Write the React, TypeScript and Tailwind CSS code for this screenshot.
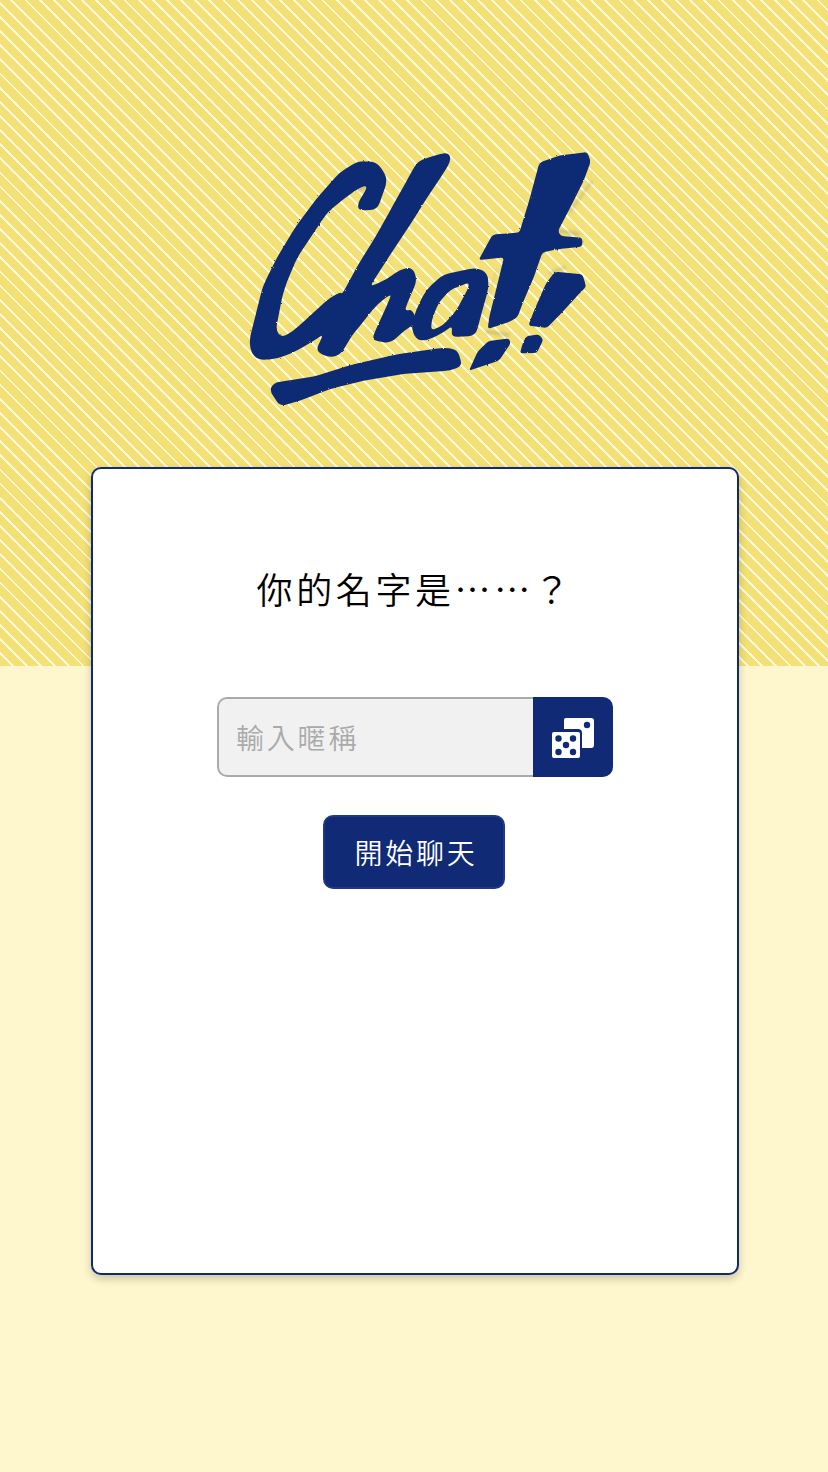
import { useState } from "react";

const NAVY = "#102a75";

// rounds each corner of a traced outline, so the brush strokes do not look like polygons
function roundPath(pts: number[][], r = 34) {
  let d = "";
  pts.forEach((p, i) => {
    const prev = pts[(i - 1 + pts.length) % pts.length];
    const next = pts[(i + 1) % pts.length];
    const lenA = Math.hypot(prev[0] - p[0], prev[1] - p[1]);
    const lenB = Math.hypot(next[0] - p[0], next[1] - p[1]);
    const a = Math.min(r, lenA / 2) / lenA;
    const b = Math.min(r, lenB / 2) / lenB;
    const ax = p[0] + (prev[0] - p[0]) * a;
    const ay = p[1] + (prev[1] - p[1]) * a;
    const bx = p[0] + (next[0] - p[0]) * b;
    const by = p[1] + (next[1] - p[1]) * b;
    d += `${i === 0 ? "M" : "L"}${ax.toFixed(1)} ${ay.toFixed(1)} Q${p[0]} ${p[1]} ${bx.toFixed(1)} ${by.toFixed(1)} `;
  });
  return d + "Z";
}

const chShape = [
  [385, 63], [440, 66], [467, 103], [470, 130], [457, 165], [442, 209], [386, 212], [383, 190], [408, 150], [410, 137],
  [390, 142], [347, 172], [292, 217], [242, 292], [202, 352], [172, 422], [157, 467], [147, 522], [137, 570], [155, 593],
  [190, 573], [250, 518], [300, 473], [333, 456], [336, 463], [388, 368], [438, 288], [488, 198], [538, 108], [563, 63],
  [610, 48], [654, 36], [664, 60], [642, 97], [592, 172], [542, 252], [482, 342], [437, 412], [419, 441], [470, 418],
  [510, 388], [547, 381], [562, 420], [532, 490], [524, 513], [547, 508], [562, 547], [522, 572], [482, 610], [433, 602],
  [428, 590], [453, 535], [478, 480], [484, 461], [442, 492], [402, 542], [362, 592], [334, 642], [300, 654], [256, 634],
  [280, 584], [267, 592], [202, 632], [140, 657], [85, 660], [63, 637], [58, 600], [73, 540], [98, 440], [138, 358],
  [198, 258], [258, 178], [328, 98],
];
const aOuter = [
  [640, 403], [740, 383], [772, 398], [777, 440], [752, 530], [737, 587], [663, 592], [668, 556], [642, 577], [590, 602],
  [558, 600], [543, 560], [558, 510], [588, 450],
];
const aHole = [[715, 428], [660, 450], [625, 490], [605, 540], [603, 572], [640, 555], [680, 510], [717, 440]];
const tShape = [
  [928, 68], [990, 46], [1072, 36], [1082, 65], [1062, 120], [1022, 200], [984, 273], [992, 288], [1057, 293], [1057, 320],
  [985, 327], [937, 337], [912, 410], [882, 480], [862, 532], [835, 547], [773, 567], [778, 530], [798, 450], [822, 352],
  [746, 360], [788, 283], [868, 278], [898, 180],
];
const bang = [[975, 395], [1057, 403], [1069, 440], [1042, 467], [992, 522], [950, 564], [895, 557], [913, 510], [948, 430]];
const bangDot = [[890, 588], [927, 583], [940, 600], [920, 639], [870, 640], [878, 610]];
const tDot = [[775, 603], [837, 595], [842, 610], [807, 662], [717, 692], [743, 635]];
const underline = [
  [133, 728], [250, 710], [370, 673], [500, 643], [640, 623], [682, 628], [697, 677], [660, 692], [520, 702], [400, 722],
  [300, 747], [210, 782], [150, 799], [118, 750],
];

function Logo() {
  return (
    <svg viewBox="0 0 1140 840" className="block w-[380px] h-[280px] ml-[230px]">
      <defs>
        <filter id="rough" x="-5%" y="-5%" width="110%" height="110%">
          <feTurbulence type="fractalNoise" baseFrequency="0.14" numOctaves="2" seed="4" />
          <feDisplacementMap in="SourceGraphic" scale="6" />
        </filter>
        <filter id="smudge" x="-30%" y="-30%" width="160%" height="160%">
          <feGaussianBlur stdDeviation="4" />
        </filter>
      </defs>
      {/* faint brush smudges */}
      <g filter="url(#smudge)" fill="none" stroke="#8a8a7a" strokeOpacity="0.4" strokeWidth="7" strokeLinecap="round">
        <path d="M385 150 L412 138" strokeWidth="12" />
        <path d="M1085 125 L1020 215" strokeWidth="6" />
        <path d="M985 272 L1045 282" strokeWidth="10" />
        <path d="M960 400 L1005 382" />
        <path d="M770 575 L835 585" strokeWidth="9" />
        <path d="M800 390 L755 530" strokeWidth="3" />
        <path d="M935 335 L925 365" />
      </g>
      <g filter="url(#rough)" fill={NAVY}>
        <path d={roundPath(chShape, 22)} />
        <path fillRule="evenodd" d={roundPath(aOuter, 22) + " " + roundPath(aHole, 14)} />
        <path d={roundPath(tShape, 10)} />
        <path d={roundPath(bang, 10)} />
        <path d={roundPath(bangDot, 8)} />
        <path d={roundPath(tDot, 8)} />
        <path d={roundPath(underline, 18)} />
      </g>
    </svg>
  );
}

function DiceIcon() {
  return (
    <svg viewBox="0 0 42 40" className="w-[42px] h-[40px]">
      <path
        fill="#fff"
        d="M14 0 H39 a3 3 0 0 1 3 3 V27 a3 3 0 0 1 -3 3 H30 V15 a4 4 0 0 0 -4 -4 H12 V2 a2 2 0 0 1 2 -2 Z"
      />
      <circle cx="35" cy="7" r="3.2" fill={NAVY} />
      <rect x="0" y="14" width="28" height="26" rx="2" fill="#fff" />
      <circle cx="6.5" cy="20.5" r="3.2" fill={NAVY} />
      <circle cx="21" cy="20.5" r="3.2" fill={NAVY} />
      <circle cx="14" cy="27" r="3.2" fill={NAVY} />
      <circle cx="6.5" cy="34" r="3.2" fill={NAVY} />
      <circle cx="21" cy="34" r="3.2" fill={NAVY} />
    </svg>
  );
}

export default function App() {
  const [name, setName] = useState("");

  return (
    <div
      className="h-[1472px] overflow-hidden bg-[#fef6cd] bg-no-repeat bg-[size:100%_666px] bg-[image:repeating-linear-gradient(45deg,#f3e076_0,#f3e076_8px,#fff9d6_8px,#fff9d6_10px)] pt-[140px] font-['Noto_Sans_CJK_TC','Noto_Sans_CJK_SC',sans-serif]"
    >
      <Logo />

      <div className="mt-[47px] ml-[91px] flex h-[808px] w-[648px] flex-col items-center rounded-[10px] border-2 border-[#102a75] bg-white pt-[92px] shadow-[0_4px_8px_rgba(0,0,0,0.2)]">
        <h1 className="text-[36px] leading-[54px] font-[350] tracking-[3.6px] text-black">你的名字是……？</h1>

        <div className="mt-[82px] flex h-[80px] w-[396px]">
          <input
            value={name}
            onChange={(e) => setName(e.target.value)}
            placeholder="輸入暱稱"
            className="h-full w-[316px] rounded-l-[10px] border-2 border-r-0 border-[#aaaaaa] bg-[#f1f1f1] px-[17px] text-[28px] font-[350] tracking-[2.8px] text-black outline-none placeholder:text-[#aaaaaa]"
          />
          <button className="flex h-full w-[80px] items-center justify-center rounded-r-[10px] bg-[#102a75] pt-[2px]">
            <DiceIcon />
          </button>
        </div>

        <button className="mt-[38px] mr-[2px] h-[74px] w-[182px] rounded-[10px] border-2 border-[#1f3a85] bg-[#102a75] pl-[4px] text-[28px] font-[350] tracking-[2.8px] text-white">
          開始聊天
        </button>
      </div>
    </div>
  );
}
